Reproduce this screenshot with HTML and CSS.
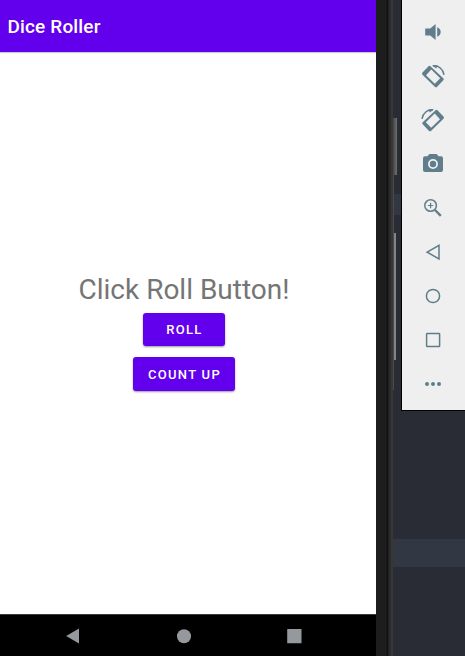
FILE: index.html
```
<!DOCTYPE html>
<html lang="en">
<head>
<meta charset="utf-8">
<title>Dice Roller</title>
<link rel="stylesheet" href="styles.css">
</head>
<body>
<div class="desktop">
  <main class="screen">
    <header class="app-bar"><h1>Dice Roller</h1></header>
    <section class="content">
      <p class="result">Click Roll Button!</p>
      <button class="btn roll">ROLL</button>
      <button class="btn count">COUNT UP</button>
    </section>
    <nav class="nav-bar">
      <svg viewBox="0 0 16 16"><path d="M1.2 8 14 .6v15z"/></svg>
      <svg viewBox="0 0 16 16"><circle cx="8" cy="8.2" r="7"/></svg>
      <svg viewBox="0 0 16 16"><rect x="1.2" y="1" width="14.3" height="14.3" rx=".6"/></svg>
    </nav>
  </main>
  <div class="bezel"></div>
  <div class="backdrop">
    <i class="band upper"></i>
    <i class="band lower"></i>
    <i class="key power"></i>
    <i class="key volume"></i>
    <i class="key edge"></i>
    <aside class="toolbar">
      <svg viewBox="0 0 24 24"><path d="M4.2 8.6h5L14.6 4v16l-5.4-4.6h-5zM16.2 7.2c4.7 1.8 4.7 7.8 0 9.6z"/></svg>
      <svg viewBox="0 0 24 24"><path fill-rule="evenodd" d="M7.3 2.4Q8.5 1.3 9.700 2.400L22.300 14.300Q23.300 15.300 22.300 16.300L16.200 22.700Q15 23.800 13.800 22.700L1.500 10.800Q.4 9.700 1.500 8.500zM10.300 5.600 5 11.200 13.800 19.800 19.200 14.200z"/><path class="line" d="M12 1.900C17.500 1.200 22.200 5.200 23 10.800"/><path d="m11 1.200 5.500.2-1.300 3.200z"/></svg>
      <svg viewBox="0 0 24 24"><path fill-rule="evenodd" d="M16.700 2.400Q15.500 1.300 14.300 2.400L1.700 14.300Q.7 15.300 1.700 16.300L7.800 22.700Q9 23.800 10.200 22.700L22.500 10.800Q23.600 9.700 22.500 8.500zM13.700 5.600 19 11.200 10.200 19.800 4.800 14.200z"/><path class="line" d="M12 1.900C6.500 1.200 1.800 5.200 1 10.800"/><path d="m13 1.200-5.500.2 1.300 3.200z"/></svg>
      <svg viewBox="0 0 24 24"><path fill-rule="evenodd" d="M8.400 2.100h7.200l2 2.200H20Q22 4.300 22 6.300V18q0 2-2 2H4q-2 0-2-2V6.300q0-2 2-2h2.400zM12 7a5 5 0 1 0 0 10 5 5 0 0 0 0-10z"/><circle cx="12" cy="12" r="3.200"/></svg>
      <svg viewBox="0 0 24 24"><g class="line"><circle cx="9.600" cy="9.500" r="5.800"/><path class="plus" d="M6.900 9.500h5.400M9.600 6.800v5.400"/><path class="handle" d="m14 14 5.800 5.800"/></g></svg>
      <svg viewBox="0 0 24 24"><path class="line" d="M6.200 12.200 18 5.400v13.500z"/></svg>
      <svg viewBox="0 0 24 24"><circle class="line" cx="12" cy="12" r="6.600"/></svg>
      <svg viewBox="0 0 24 24"><rect class="line" x="5.600" y="5.500" width="13" height="13" rx=".5"/></svg>
      <svg viewBox="0 0 24 24"><circle cx="6" cy="12" r="2"/><circle cx="12" cy="12" r="2"/><circle cx="18" cy="12" r="2"/></svg>
    </aside>
  </div>
</div>
</body>
</html>
```
FILE: styles.css
```
* { box-sizing: border-box; }
body { margin: 0; overflow: hidden; font-family: Roboto, "Liberation Sans", sans-serif; }
.desktop { display: flex; width: 465px; height: 656px; background: #292c35; }
.screen { display: flex; flex-direction: column; width: 376px; background: #fff; }
.app-bar { display: flex; align-items: center; height: 52px; padding: 2px 7.5px 0; background: #6200ee; box-shadow: 0 1px 1px #0003; }
h1 { margin: 0; font-size: 19px; font-weight: 500; line-height: 24px; letter-spacing: .15px; color: #fff; }
.content { flex: 1; display: flex; flex-direction: column; align-items: center; padding-top: 221px; padding-right: 8px; }
.result { margin: 0; height: 39.7px; font-size: 28px; line-height: 34px; color: #757575; white-space: nowrap; }
.btn { height: 33.5px; margin: 0 0 11px; padding: 1px 0 0 1px; border: 0; border-radius: 3px; background: #6200ee; color: #fff; font: 500 13px/32px Roboto, sans-serif; letter-spacing: 1.3px; box-shadow: 0 1px 2px #0006; }
.roll { width: 82px; }
.count { width: 102px; padding-top: 2px; }
.nav-bar { display: flex; justify-content: space-between; align-items: center; height: 42px; padding: 0 74px 0 65px; background: #000; border-top: 1px solid #3c3c3c; }
.nav-bar svg { width: 16px; height: 16px; fill: #95999d; }
.bezel { width: 17px; background: linear-gradient(90deg, #1d1d1d 0 10px, #181818 10px 11px, #101010 11px 12px, #222 12px 13px, #292929 13px 14px, #2e2d2d 14px 15px, #393736 15px); }
.backdrop { position: relative; flex: 1; display: flex; justify-content: flex-end; align-items: flex-start; }
.band { position: absolute; left: 0; right: 0; background: #313843; }
.upper { top: 194px; height: 21px; }
.lower { top: 539px; height: 28px; }
.key { position: absolute; left: 1px; background: linear-gradient(90deg, #4c4c4d, #707071); }
.power { top: 118px; width: 3px; height: 57px; }
.volume { top: 233px; width: 2px; height: 127px; background: #858587; }
.edge { left: 0; top: 118px; width: 1px; height: 272px; background: #4a4a4b; }
.toolbar { position: relative; display: flex; flex-direction: column; align-items: flex-start; gap: 20px; width: 64px; height: 411px; padding: 20px 0 0 19px; background: #efefef; border-left: 1px solid #000; border-bottom: 1px solid #000; }
.toolbar svg { flex: none; width: 24px; height: 24px; fill: #607d8b; }
.toolbar .line { fill: none; stroke: #607d8b; stroke-width: 1.5; }
.toolbar .plus { stroke-width: 1.2; }
.toolbar .handle { stroke-width: 2.4; }
```
